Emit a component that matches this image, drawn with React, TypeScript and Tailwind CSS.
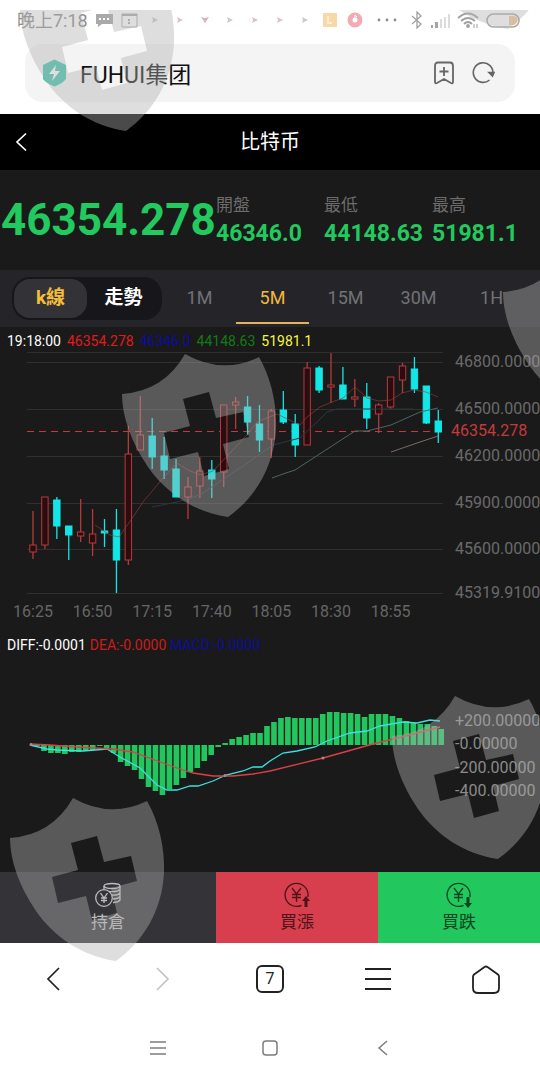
import { type ReactNode } from "react";

const UP = "#b53a3a";
const DOWN = "#12e6e6";

// [high, body top, body bottom, low, rising]
const candles: [number, number, number, number, boolean][] = [
  [159, 193, 200, 207, true],
  [145, 145, 193, 197, true],
  [145, 148, 174, 187, false],
  [174, 174, 183, 208, false],
  [147, 180, 184, 190, true],
  [157, 182, 191, 204, true],
  [167, 179, 181, 195, false],
  [157, 178, 208, 241, false],
  [74, 102, 208, 213, true],
  [44, 83, 98, 98, true],
  [66, 84, 105, 117, false],
  [85, 104, 118, 127, false],
  [107, 117, 145, 145, false],
  [125, 135, 145, 167, true],
  [105, 119, 134, 146, true],
  [108, 118, 127, 146, false],
  [53, 53, 120, 135, true],
  [45, 50, 53, 77, true],
  [44, 55, 70, 83, false],
  [53, 72, 88, 100, false],
  [57, 59, 87, 106, true],
  [39, 58, 70, 72, false],
  [62, 72, 93, 105, false],
  [10, 16, 93, 93, true],
  [14, 16, 38, 41, false],
  [1, 33, 35, 51, true],
  [15, 33, 47, 47, false],
  [27, 45, 47, 55, true],
  [31, 45, 66, 77, false],
  [51, 53, 62, 81, true],
  [25, 25, 55, 57, true],
  [11, 14, 28, 41, true],
  [5, 17, 37, 41, false],
  [34, 34, 71, 72, false],
  [58, 69, 80, 91, false],
];

const priceTicks = [
  { y: 10, label: "46800.0000" },
  { y: 57, label: "46500.0000" },
  { y: 104, label: "46200.0000" },
  { y: 151, label: "45900.0000" },
  { y: 197, label: "45600.0000" },
  { y: 241, label: "45319.9100" },
];

const times = ["16:25", "16:50", "17:15", "17:40", "18:05", "18:30", "18:55"];

const macd = [
  0, -1, -6, -8, -8, -9, -7, -7, -6, -5, -1, -3, -8, -17, -21, -25, -34, -42,
  -46, -50, -44, -40, -33, -27, -23, -16, -10, -2, 2, 6, 8, 10, 12, 12, 19, 23,
  27, 28, 27, 27, 27, 27, 31, 33, 33, 32, 32, 31, 28, 31, 31, 31, 29, 27, 24,
  22, 21, 21, 19, 16,
];

const macdTicks = [
  { y: 61, label: "+200.00000" },
  { y: 84, label: "-0.00000" },
  { y: 108, label: "-200.00000" },
  { y: 131, label: "-400.00000" },
];

const periods = ["1M", "5M", "15M", "30M", "1H"];

const stats = [
  { label: "開盤", value: "46346.0" },
  { label: "最低", value: "44148.63" },
  { label: "最高", value: "51981.1" },
];

function Shield({ className }: { className: string }) {
  return (
    <svg
      viewBox="0 0 156 164"
      className={`absolute h-[164px] w-[156px] ${className}`}
      fill="#b0b0b0"
      fillOpacity="0.42"
      fillRule="evenodd"
      aria-hidden="true"
    >
      <path d="M0 40Q42 37 63 0Q100 21 137 3C149 24 155 50 154 75C152 112 134 143 106 163C72 158 44 139 26 113C9 88 0 62 0 40ZM61 45L68 72L42 79L48 105L76 98L82 122L107 115L101 90L127 83L121 58L94 64L87 38Z" />
    </svg>
  );
}

function Slot({ children }: { children: ReactNode }) {
  return <span className="flex w-[25px] justify-center">{children}</span>;
}

function Flag({ color = "#d5c3c6" }: { color?: string }) {
  return (
    <Slot>
      <svg width="8" height="8" viewBox="0 0 8 8" fill={color}>
        <path d="M1 1L7 4L1 7L2 4Z" />
      </svg>
    </Slot>
  );
}

function StatusBar() {
  return (
    <div className="flex h-10 items-center bg-white pl-[17px] text-[#8c8c8c]">
      <span className="w-[75px] shrink-0 whitespace-nowrap text-[18px]">
        晚上7:18
      </span>
      <Slot>
        <svg width="17" height="14" viewBox="0 0 17 14">
          <path d="M0 1H17V11H6L2 14V11H0Z" fill="#a9a9a9" />
          <path d="M3 6H5M7 6H9M11 6H13" stroke="#fff" strokeWidth="2" />
        </svg>
      </Slot>
      <Slot>
        <svg width="17" height="15" viewBox="0 0 17 15" fill="none" stroke="#a9a9a9">
          <path d="M1 1H16V14H1Z" />
          <path d="M1 2H16" strokeWidth="2" />
          <path d="M8 6V8M8 9V11" strokeWidth="2" />
        </svg>
      </Slot>
      <Flag />
      <Flag />
      <Slot>
        <svg width="8" height="8" viewBox="0 0 8 8" fill="#d9b4ba">
          <path d="M0 1L4 2L8 1L4 7Z" />
        </svg>
      </Slot>
      <Flag />
      <Flag />
      <Flag />
      <Flag />
      <Slot>
        <svg width="14" height="14" viewBox="0 0 14 14">
          <path d="M0 0H14V14H0Z" fill="#fad7a6" />
          <path d="M5 3V10H9" stroke="#fff0d8" strokeWidth="2" fill="none" />
        </svg>
      </Slot>
      <Slot>
        <svg width="16" height="16" viewBox="0 0 16 16" fill="none">
          <circle cx="8" cy="8" r="5" stroke="#f3a9b6" strokeWidth="5" />
          <path d="M8 8V3L10 5" stroke="#fff" />
        </svg>
      </Slot>
      <span className="flex w-10 justify-center">
        <svg width="20" height="4" viewBox="0 0 20 4" fill="#8c8c8c">
          <circle cx="2" cy="2" r="1.4" />
          <circle cx="10" cy="2" r="1.4" />
          <circle cx="18" cy="2" r="1.4" />
        </svg>
      </span>
      <span className="flex w-5 justify-center">
        <svg width="12" height="18" viewBox="0 0 12 18" fill="none" stroke="#a0a0a0" strokeWidth="1.3">
          <path d="M1 5L10 13L6 17V1L10 5L1 13" />
        </svg>
      </span>
      <span className="flex w-[26px] justify-center">
        <svg width="20" height="15" viewBox="0 0 20 15">
          <path d="M1 15V12H3V15ZM5 15V9H8V15Z" fill="#a5a5a5" />
          <path d="M11 15V6M15 15V4M19 15V1" stroke="#dcdcdc" strokeWidth="2" />
        </svg>
      </span>
      <span className="flex w-[30px] justify-center">
        <svg width="22" height="17" viewBox="0 0 22 17" fill="none" stroke="#a0a0a0" strokeWidth="1.8">
          <path d="M1 6Q11 -3 21 6M4 9Q11 3 18 9M7 12Q11 8 15 12" />
          <circle cx="11" cy="14" r="1" />
          <path d="M17 12V16M20 12V16" strokeWidth="1" />
        </svg>
      </span>
      <span className="flex w-10 justify-center">
        <svg width="34" height="15" viewBox="0 0 34 15" fill="none">
          <rect x="1" y="1" width="32" height="13" rx="6.5" stroke="#a8a8a8" strokeWidth="1.6" />
          <path d="M23 3H27A4.5 4.5 0 0 1 27 12H23Z" fill="#f5c896" />
        </svg>
      </span>
    </div>
  );
}

function AddressBar() {
  return (
    <div className="h-[74px] bg-white px-[25px] pt-1">
      <div className="flex h-[58px] items-center rounded-[18px] bg-[#f4f4f4] pr-5 pl-[17px] text-[#666]">
        <svg width="25" height="28" viewBox="0 0 25 28" className="shrink-0">
          <path d="M12.5 0.5L24 6V20Q20 25 12.5 27.5Q5 25 1 20V6Z" fill="#45c6b0" />
          <path d="M14 6L7 15H12L10 22L18 12H13Z" fill="#fff" />
        </svg>
        <label htmlFor="address" className="sr-only">
          Address
        </label>
        <input
          id="address"
          defaultValue="FUHUI集团"
          className="ml-[13px] h-11 min-w-0 flex-1 bg-transparent text-[23px] text-[#111] outline-none"
        />
        <button aria-label="Bookmark" className="mr-4">
          <svg width="22" height="24" viewBox="0 0 22 24" fill="none" stroke="currentColor" strokeWidth="1.8">
            <path d="M5 1.5H17Q20 1.5 20 5V21Q20 23 18 22L11 18L4 22Q2 23 2 21V5Q2 1.5 5 1.5ZM11 6V15M6.5 10.5H15.5" />
          </svg>
        </button>
        <button aria-label="Reload">
          <svg width="24" height="24" viewBox="0 0 24 24" fill="none" stroke="currentColor" strokeWidth="1.6">
            <path d="M18.5 19A9.800 9.800 0 1 1 21.800 13" />
            <path d="M18 11.5H23L21.5 15Z" fill="currentColor" />
          </svg>
        </button>
      </div>
    </div>
  );
}

function TitleBar() {
  return (
    <header className="grid h-14 grid-cols-[1fr_auto_1fr] items-center bg-black text-white">
      <button aria-label="Back" className="ml-[14px] justify-self-start">
        <svg width="14" height="20" viewBox="0 0 14 20" fill="none" stroke="currentColor" strokeWidth="1.7">
          <path d="M12 1.5L3 10L12 18.5" />
        </svg>
      </button>
      <h1 className="text-[20px]">比特币</h1>
    </header>
  );
}

function Quote() {
  return (
    <section className="grid h-[100px] grid-cols-[2fr_1fr_1fr_1fr] items-center bg-[#1a1a1a]">
      <strong className="pl-px text-[44px] leading-none font-bold text-[#22c95e]">
        46354.278
      </strong>
      {stats.map((s) => (
        <div key={s.label} className="min-w-0 whitespace-nowrap">
          <div className="text-[17px] leading-7 text-[#6c6c6c]">{s.label}</div>
          <div className="text-[23px] leading-[30px] font-bold text-[#22c95e]">
            {s.value}
          </div>
        </div>
      ))}
    </section>
  );
}

function Periods() {
  return (
    <nav className="flex h-[57px] items-center overflow-hidden bg-[#252529]">
      <div className="mr-px ml-3 flex h-[43px] w-[150px] shrink-0 items-center rounded-[18px] bg-[#17171b] p-[2px] text-[19px] font-bold">
        <button className="h-[39px] flex-1 rounded-[16px] bg-[#323237] text-[#f3bd3a]">
          k線
        </button>
        <button className="h-[39px] flex-1 text-white">走勢</button>
      </div>
      {periods.map((p) => (
        <button
          key={p}
          className={`h-[50px] w-[73px] shrink-0 border-b-2 text-[18px] ${
            p === "5M"
              ? "border-[#e3b25a] text-[#f0b83e]"
              : "border-transparent text-[#727277]"
          }`}
        >
          {p}
        </button>
      ))}
    </nav>
  );
}

function PriceChart() {
  return (
    <svg viewBox="0 0 540 278" className="block w-full" fontSize="16" fill="none">
      <path d="M27 0.5H443" stroke="#2e2e2e" />
      {priceTicks.map((t) => (
        <g key={t.label}>
          <path d={`M27 ${t.y + 0.5}H443`} stroke="#303030" />
          <text x="455" y={t.y + 5} fill="#6a6a6a">
            {t.label}
          </text>
        </g>
      ))}
      {times.map((t, i) => (
        <text key={t} x={33 + i * 59.6} y="265" textAnchor="middle" fill="#666">
          {t}
        </text>
      ))}
      <path d="M27 79.5H443" stroke="#c8373f" strokeWidth="1.2" strokeDasharray="7 5" />

      {candles.map(([high, top, bottom, low, rising], i) => {
        const x = 33 + i * 11.92;
        const color = rising ? UP : DOWN;
        return (
          <g key={i} stroke={color}>
            <path d={`M${x} ${high}V${top}M${x} ${bottom}V${low}`} strokeWidth="1.3" />
            <rect
              x={x - 3.2}
              y={top}
              width="6.4"
              height={bottom - top}
              fill={rising ? "#2b0d11" : DOWN}
            />
          </g>
        );
      })}

      {/* moving averages */}
      <path
        d="M95 173L110 183L119 185L133 165L143 150L163 126L177 111L188 118L200 123L213 119L230 101L247 83L257 70L277 62L300 73L307 65L320 55L332 50L343 46L355 35L367 46L379 49L391 48L402 41L414 38L426 40L438 45"
        stroke="#a03c3c"
        strokeOpacity="0.6"
      />
      <path d="M152 155L177 150L200 143L240 116L273 93L300 86L317 70L327 60L337 57H413" stroke="#2d353e" />
      <path d="M272 126L283 122L295 118L355 79L367 79L391 73L420 60L438 56" stroke="#4c6663" />
      <path d="M391 100L420 90L438 84" stroke="#7d6a63" />

      <text x="451" y="84" fill="#c43a3a">
        46354.278
      </text>
    </svg>
  );
}

function MacdChart() {
  return (
    <svg viewBox="0 0 540 212" className="block w-full" fontSize="16" fill="none">
      {macd.map((v, i) => (
        <rect
          key={i}
          x={27.2 + i * 6.97}
          y={v > 0 ? 85 - v : 85}
          width="5.6"
          height={Math.abs(v)}
          fill="#22c55e"
        />
      ))}
      <path
        d="M30 85L47 89L57 90L83 91L107 89L120 97L140 108L157 125L167 130L177 130L190 126L198 126L213 121L226 115L243 111L253 107L262 107L270 101L283 93L297 91L315 87L327 81L350 73L367 71L380 66L403 62L417 63L430 60L440 61"
        stroke="#3fe0e0"
        strokeWidth="1.3"
      />
      <path
        d="M30 84L50 85L77 87L113 89L133 92L160 102L177 108L193 113L213 116L233 116L253 114L270 111L323 98L373 84L417 73L440 67"
        stroke="#d94048"
        strokeWidth="1.3"
      />
      <g fill="#a88a92">
        <circle cx="31" cy="84.5" r="1.5" />
        <circle cx="225" cy="115.5" r="1.5" />
        <circle cx="323" cy="98" r="1.5" />
      </g>
      {macdTicks.map((t) => (
        <text key={t.label} x="455" y={t.y + 5} fill="#8a8a8a">
          {t.label}
        </text>
      ))}
    </svg>
  );
}

function YenIcon({ up }: { up: boolean }) {
  return (
    <svg width="26" height="26" viewBox="0 0 26 26" fill="none" stroke="currentColor" strokeWidth="1.3">
      <path d="M17.5 23.3A11.5 11.5 0 1 1 24 11.5" />
      <path d="M24 11.5V15" />
      <path d="M8 6L12.5 12L17 6M12.5 12V20M8 12.5H17M8 15.5H17" />
      {up ? (
        <path d="M22 14L26 19H23.5V25H20.5V19H18Z" fill="currentColor" stroke="none" />
      ) : (
        <path d="M22 26L26 21H23.5V15H20.5V21H18Z" fill="currentColor" stroke="none" />
      )}
    </svg>
  );
}

function TradeBar() {
  return (
    <div className="grid h-[71px] grid-cols-[4fr_3fr_3fr] text-[17px] leading-6">
      <button className="flex flex-col items-center justify-center gap-[2px] bg-[#333338] text-[#bdbdbf]">
        <svg width="26" height="26" viewBox="0 0 26 26" fill="none" stroke="currentColor" strokeWidth="1.3">
          <circle cx="9" cy="16" r="8.3" />
          <path d="M5.5 11L9 16L12.5 11M9 16V21M6 16H12M6 18.5H12" />
          <ellipse cx="17" cy="4" rx="8" ry="2.5" />
          <path d="M9 4V7M25 4V18Q23 20.5 18 20.5M25 7.5Q23 10 14 9.5M25 11Q23 13.5 17 13M25 14.5Q23 17 18 17" />
        </svg>
        持倉
      </button>
      <button className="flex flex-col items-center justify-center gap-[2px] bg-[#d73f4e] text-[#4c1419]">
        <YenIcon up />
        買漲
      </button>
      <button className="flex flex-col items-center justify-center gap-[2px] bg-[#22c75e] text-[#0c4520]">
        <YenIcon up={false} />
        買跌
      </button>
    </div>
  );
}

function BrowserNav() {
  return (
    <nav className="grid h-[72px] grid-cols-5 place-items-center bg-white text-[#222]">
      <button aria-label="Back">
        <svg width="16" height="26" viewBox="0 0 16 26" fill="none" stroke="currentColor" strokeWidth="1.7">
          <path d="M13 2L2 13L13 24" />
        </svg>
      </button>
      <button aria-label="Forward" className="text-[#c4c4c4]">
        <svg width="16" height="26" viewBox="0 0 16 26" fill="none" stroke="currentColor" strokeWidth="1.7">
          <path d="M3 2L14 13L3 24" />
        </svg>
      </button>
      <button
        aria-label="Tabs"
        className="flex size-7 items-center justify-center rounded-md border-2 border-current text-[16px] leading-none"
      >
        7
      </button>
      <button aria-label="Menu">
        <svg width="26" height="24" viewBox="0 0 26 24" stroke="currentColor" strokeWidth="1.8">
          <path d="M0 2H26M0 12H26M0 22H26" />
        </svg>
      </button>
      <button aria-label="Home">
        <svg width="28" height="29" viewBox="0 0 28 29" fill="none" stroke="currentColor" strokeWidth="1.8" strokeLinejoin="round">
          <path d="M12.5 2Q14 1 15.5 2L26 9.5Q27 10.5 27 12V23Q27 28 22 28H6Q1 28 1 23V12Q1 10.5 2 9.5Z" />
        </svg>
      </button>
    </nav>
  );
}

function SystemNav() {
  return (
    <nav className="flex h-[65px] items-center justify-center gap-[96px] bg-white text-[#7c7c7c]">
      <button aria-label="Recent apps">
        <svg width="16" height="14" viewBox="0 0 16 14" stroke="currentColor" strokeWidth="1.5">
          <path d="M0 1H16M0 7H16M0 13H16" />
        </svg>
      </button>
      <button aria-label="Home screen">
        <svg width="16" height="16" viewBox="0 0 16 16" fill="none" stroke="currentColor" strokeWidth="1.5">
          <rect x="1" y="1" width="14" height="14" rx="3" />
        </svg>
      </button>
      <button aria-label="System back">
        <svg width="16" height="16" viewBox="0 0 16 16" fill="none" stroke="currentColor" strokeWidth="1.5">
          <path d="M13 1L5 8L13 15" />
        </svg>
      </button>
    </nav>
  );
}

export default function App() {
  return (
    <div className="relative overflow-hidden bg-[#1a1a1a] font-['Roboto','Noto_Sans_CJK_TC',sans-serif]">
      <StatusBar />
      <AddressBar />
      <TitleBar />
      <Quote />
      <Periods />

      <main>
        <div className="flex h-[25px] items-center gap-[6px] pt-[3px] pl-[7px] text-[14px] leading-none whitespace-nowrap">
          <span className="text-white">19:18:00</span>
          <span className="text-[#e01b1b]">46354.278</span>
          <span className="text-[#0d0d9c]">46346.0</span>
          <span className="text-[#0f7d14]">44148.63</span>
          <span className="text-[#f7f73c]">51981.1</span>
        </div>
        <PriceChart />
        <div className="flex h-[30px] items-center gap-1 pl-[7px] text-[14px] leading-none whitespace-nowrap">
          <span className="text-white">DIFF:-0.0001</span>
          <span className="text-[#cf1a1a]">DEA:-0.0000</span>
          <span className="text-[#0d0d9c]">MACD:-0.0000</span>
        </div>
        <MacdChart />
      </main>

      <TradeBar />
      <BrowserNav />
      <SystemNav />

      {/* watermark */}
      <div className="pointer-events-none absolute inset-x-0 top-[10px] bottom-0 overflow-hidden">
        <Shield className="top-[-42px] left-[20px]" />
        <Shield className="top-[-144px] left-[402px]" />
        <Shield className="top-[242px] left-[503px]" />
        <Shield className="top-[344px] left-[122px]" />
        <Shield className="top-[686px] left-[392px]" />
        <Shield className="top-[788px] left-[10px]" />
      </div>
    </div>
  );
}
